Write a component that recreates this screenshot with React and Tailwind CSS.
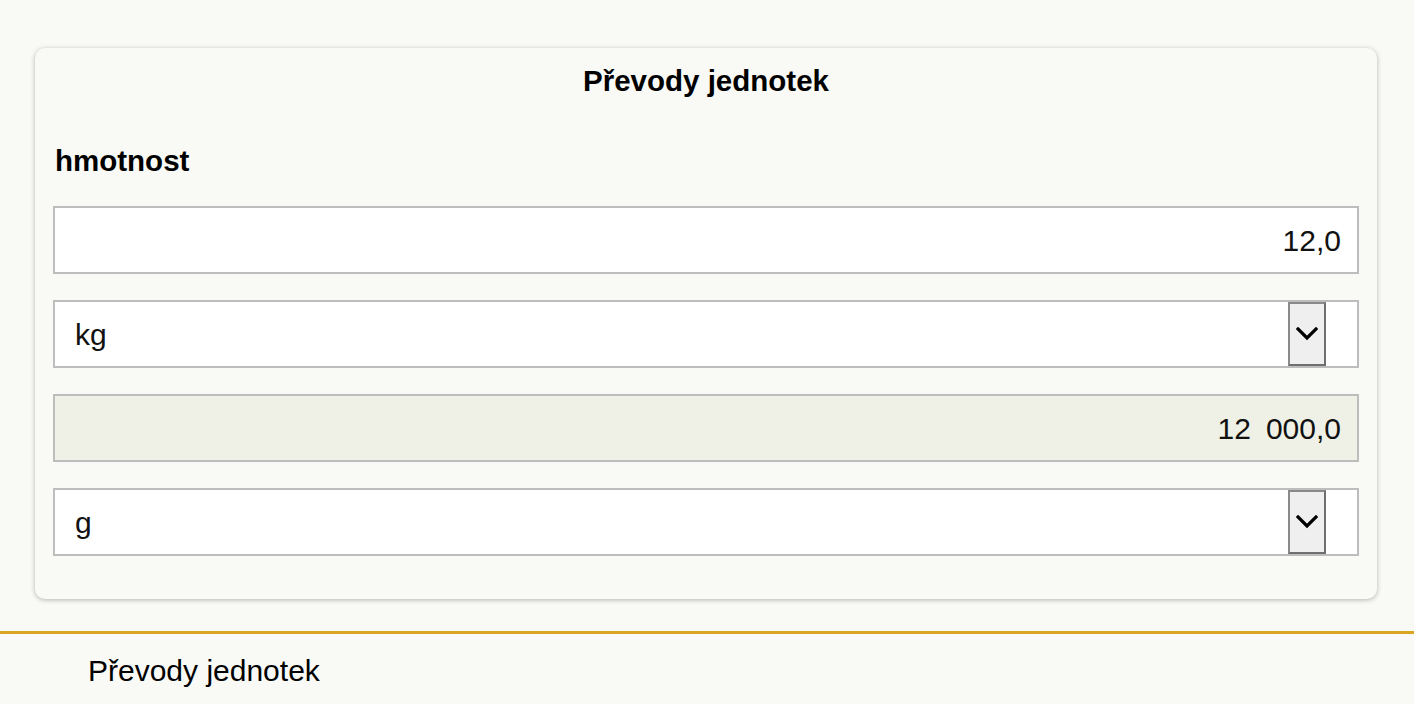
import React from 'react';

function Chevron() {
    return (
        <svg width="22" height="14" viewBox="0 0 22 14" fill="none">
            <path d="M2 2 L11 11 L20 2" stroke="#000" strokeWidth="3.2" strokeLinecap="square" />
        </svg>
    );
}

function SelectBox({ value }) {
    return (
        <div className="h-[68px] border-2 border-[#bdbdbd] bg-white flex items-center pl-[20px] pr-[31px]">
            <span className="flex-1 text-[30px] text-[#111]">{value}</span>
            <div className="w-[38px] h-[64px] bg-[#efefef] border-2 border-[#8a8a8a] border-b-[#6f6f6f] border-r-[#6f6f6f] flex items-center justify-center">
                <Chevron />
            </div>
        </div>
    );
}

export default function App() {
    return (
        <div className="min-h-screen bg-[#f9f9f5] font-['Liberation_Sans',Arial,sans-serif] text-black pt-[48px]">
            {/* Converter card */}
            <div className="mx-[35px] w-[1342px] rounded-[10px] bg-[#f9f9f5] shadow-[0_1px_5px_rgba(0,0,0,0.28)] px-[18px] pt-[16px] pb-[43px]">
                <h1 className="h-[34px] leading-[34px] text-center text-[29.5px] font-bold">Převody jednotek</h1>
                <h2 className="mt-[46px] h-[34px] leading-[34px] text-[29.5px] font-bold pl-[2px]">hmotnost</h2>

                <div className="mt-[28px] flex flex-col gap-[26px]">
                    <div className="h-[68px] border-2 border-[#bdbdbd] bg-white flex items-center justify-end pr-[16px] text-[30px] text-[#111]">
                        12,0
                    </div>
                    <SelectBox value="kg" />
                    <div className="h-[68px] border-2 border-[#bdbdbd] bg-[#f0f1e6] flex items-center justify-end pr-[16px] text-[30px] text-[#111]">
                        12{'\u2002'}000,0
                    </div>
                    <SelectBox value="g" />
                </div>
            </div>

            {/* Footer */}
            <footer className="mt-[32px] border-t-[3px] border-[#daa520] pt-[20px] pl-[88px]">
                <p className="h-[34px] leading-[34px] text-[30px]">Převody jednotek</p>
            </footer>
        </div>
    );
}
